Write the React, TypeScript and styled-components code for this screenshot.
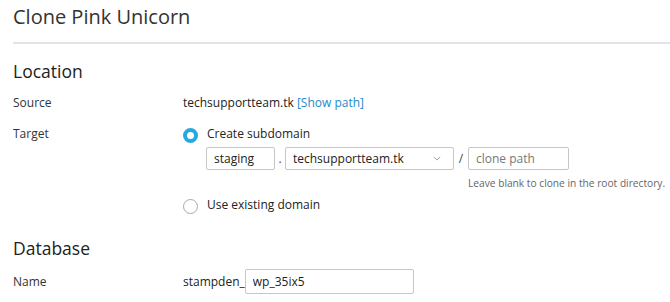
import React, { useState } from 'react'
import styled, { createGlobalStyle } from 'styled-components'

const GlobalStyle = createGlobalStyle`
  body {
    margin: 0;
    background: #fff;
    font-family: 'Open Sans', 'Noto Sans', sans-serif;
    color: #333;
  }
`

const App = () => {
  const [target, setTarget] = useState('subdomain')

  return (
    <Page>
      <GlobalStyle />
      <Title>Clone Pink Unicorn</Title>
      <Divider />

      <SectionTitle>Location</SectionTitle>
      <FormRow gap={11}>
        <Label>Source</Label>
        <Value>
          techsupportteam.tk <Link href="#">[Show path]</Link>
        </Value>
      </FormRow>

      <FormRow gap={13}>
        <Label>Target</Label>
        <Options>
          <Option onClick={() => setTarget('subdomain')}>
            <Radio checked={target === 'subdomain'} />
            Create subdomain
          </Option>
          <SubFields>
            <FieldLine>
              <TextInput width={69} defaultValue="staging" />
              <Sep width={10}>.</Sep>
              <Select>
                techsupportteam.tk
                <Chevron viewBox="0 0 10 6">
                  <path d="M1 1l4 4 4-4" fill="none" stroke="#888" strokeWidth="1" />
                </Chevron>
              </Select>
              <Sep width={14}>/</Sep>
              <PathField>
                <TextInput width={101} placeholder="clone path" />
                <Hint>Leave blank to clone in the root directory.</Hint>
              </PathField>
            </FieldLine>
          </SubFields>
          <Option onClick={() => setTarget('existing')}>
            <Radio checked={target === 'existing'} />
            Use existing domain
          </Option>
        </Options>
      </FormRow>

      <SectionTitle top={22}>Database</SectionTitle>
      <FormRow gap={9} centered>
        <Label>Name</Label>
        <Value>
          stampden_
          <TextInput width={169} tall defaultValue="wp_35ix5" />
        </Value>
      </FormRow>
    </Page>
  )
}

export default App

const Page = styled.div`
  padding: 4px 0 0 13px;
  font-size: 12px;
`

const Title = styled.h1`
  margin: 0;
  font-size: 20px;
  line-height: 26px;
  font-weight: 400;
  color: #333;
`

const Divider = styled.hr`
  margin: 12px 0 0;
  border: 0;
  height: 2px;
  background: #e3e3e9;
`

const SectionTitle = styled.h2<{ top?: number }>`
  margin: ${p => p.top ?? 15}px 0 0;
  font-size: 17.5px;
  line-height: 24px;
  font-weight: 400;
  color: #222;
`

const FormRow = styled.div<{ gap?: number; centered?: boolean }>`
  display: grid;
  grid-template-columns: 170px 1fr;
  align-items: ${p => (p.centered ? 'center' : 'start')};
  margin-top: ${p => p.gap ?? 10}px;
  line-height: 18px;
`

const Label = styled.div`
  color: #333;
`

const Value = styled.div`
  display: flex;
  align-items: center;
  white-space: pre;
  color: #222;
`

const Link = styled.a`
  color: #1d8ac9;
  text-decoration: none;
`

const Options = styled.div`
  display: flex;
  flex-direction: column;
`

const Option = styled.label`
  display: flex;
  align-items: center;
  gap: 9px;
  cursor: pointer;
  height: 18px;
  font-size: 12px;
  color: #222;
`

const Radio = styled.span<{ checked: boolean }>`
  box-sizing: border-box;
  width: 15px;
  height: 15px;
  margin-top: 2px;
  border-radius: 50%;
  flex: none;
  border: ${p => (p.checked ? '4px solid #28a8e0' : '1px solid #a9a9a9')};
  background: #fff;
`

const SubFields = styled.div`
  padding: 4px 0 6px 23px;
`

const FieldLine = styled.div`
  display: flex;
  align-items: flex-start;
`

const TextInput = styled.input<{ width: number; tall?: boolean }>`
  box-sizing: border-box;
  width: ${p => p.width}px;
  height: ${p => (p.tall ? 25 : 23)}px;
  border: 1px solid #c6c6c6;
  border-radius: 2px;
  padding: 0 7px;
  font-family: inherit;
  font-size: 12px;
  color: #222;
  outline: none;

  &::placeholder {
    color: #777;
  }
`

const Sep = styled.span<{ width: number }>`
  width: ${p => p.width}px;
  line-height: 23px;
  text-align: center;
  color: #444;
`

const Select = styled.div`
  box-sizing: border-box;
  width: 169px;
  height: 23px;
  border: 1px solid #c6c6c6;
  border-radius: 2px;
  padding: 0 12px 0 7px;
  display: flex;
  align-items: center;
  justify-content: space-between;
  color: #222;
`

const Chevron = styled.svg`
  width: 8px;
  height: 5px;
`

const PathField = styled.div`
  display: flex;
  flex-direction: column;
`

const Hint = styled.div`
  margin-top: 6px;
  font-size: 10.2px;
  line-height: 14px;
  color: #666;
  white-space: nowrap;
`
